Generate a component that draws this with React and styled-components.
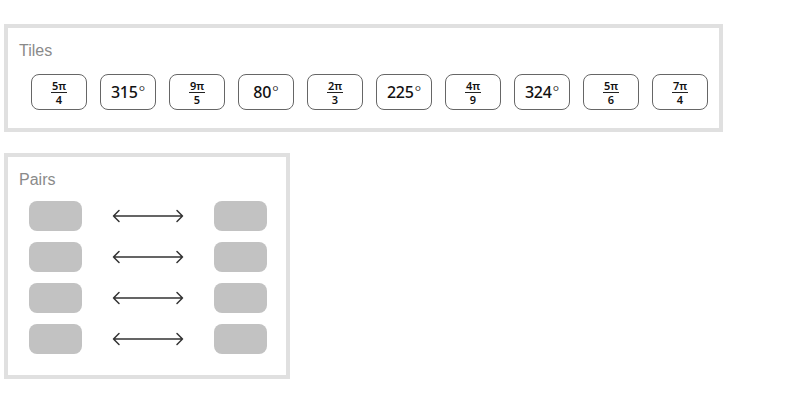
import React from 'react'
import styled, { createGlobalStyle } from 'styled-components'

const tiles = [
  { num: '5π', den: '4' },
  { deg: '315' },
  { num: '9π', den: '5' },
  { deg: '80' },
  { num: '2π', den: '3' },
  { deg: '225' },
  { num: '4π', den: '9' },
  { deg: '324' },
  { num: '5π', den: '6' },
  { num: '7π', den: '4' },
]

const pairs = [0, 1, 2, 3]

const Arrow = () => (
  <svg width="72" height="14" viewBox="0 0 72 14">
    <path d="M1.5 7 H70.5 M7 1.5 L1.5 7 L7 12.5 M65 1.5 L70.5 7 L65 12.5"
      fill="none" stroke="#333" strokeWidth="1.5" strokeLinecap="round" strokeLinejoin="round" />
  </svg>
)

const App = () => {
  return (
    <Page>
      <GlobalStyle />

      <Panel>
        <Label>Tiles</Label>
        <TileRow>
          {tiles.map((t, i) => (
            <Tile key={i}>
              {t.deg
                ? <Degree>{t.deg}<Sup>°</Sup></Degree>
                : (
                  <Fraction>
                    <Num>{t.num}</Num>
                    <Den>{t.den}</Den>
                  </Fraction>
                )}
            </Tile>
          ))}
        </TileRow>
      </Panel>

      <PairsPanel>
        <Label>Pairs</Label>
        <PairList>
          {pairs.map(p => (
            <PairRow key={p}>
              <Slot />
              <Arrow />
              <Slot />
            </PairRow>
          ))}
        </PairList>
      </PairsPanel>
    </Page>
  )
}

const GlobalStyle = createGlobalStyle`
  body {
    margin: 0;
    background: #fff;
    font-family: "Liberation Sans", Arial, sans-serif;
  }
`

const Page = styled.div`
  padding: 24px 4px;
  display: flex;
  flex-direction: column;
  align-items: flex-start;
  gap: 21px;
`

const Panel = styled.div`
  box-sizing: border-box;
  width: 719px;
  border: 4px solid #e0e0e0;
  padding: 13px 0 18px 11px;
`

const PairsPanel = styled(Panel)`
  width: 286px;
  padding: 13px 0 21px 11px;
`

const Label = styled.div`
  font-size: 16px;
  line-height: 20px;
  color: #8a8a8a;
  height: 20px;
`

const TileRow = styled.div`
  display: flex;
  gap: 13px;
  margin: 13px 0 0 12px;
`

const Tile = styled.div`
  box-sizing: border-box;
  width: 56px;
  height: 36px;
  border: 1px solid #666;
  border-radius: 8px;
  background: #fff;
  display: flex;
  align-items: center;
  justify-content: center;
  font-family: "Noto Sans", "Open Sans", sans-serif;
  color: #111;
`

const Degree = styled.span`
  font-size: 16px;
  font-weight: 500;
  line-height: 1;
  letter-spacing: -0.3px;
`

const Sup = styled.span`
  font-weight: 300;
  margin-left: 1px;
`

const Fraction = styled.span`
  display: inline-flex;
  flex-direction: column;
  align-items: center;
  font-size: 11px;
  font-weight: 600;
  line-height: 11px;
`

const Num = styled.span`
  padding: 0 1px 1px;
  border-bottom: 1px solid #222;
`

const Den = styled.span`
  padding-top: 1px;
`

const PairList = styled.div`
  display: flex;
  flex-direction: column;
  gap: 11px;
  margin: 11px 0 0 10px;
`

const PairRow = styled.div`
  display: flex;
  align-items: center;
  gap: 30px;
  height: 30px;
`

const Slot = styled.div`
  width: 53px;
  height: 30px;
  border-radius: 8px;
  background: #c2c2c2;
`

export default App
